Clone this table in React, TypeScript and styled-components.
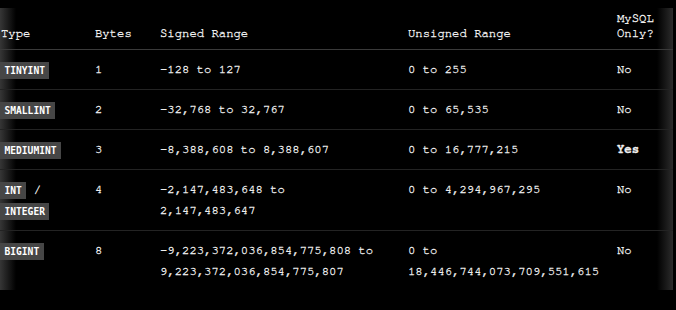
import styled, { createGlobalStyle } from "styled-components";

const GlobalStyle = createGlobalStyle`
  html, body {
    margin: 0;
    background: #000;
  }
  body {
    padding: 8px 3px 0 0;
  }
`;

type Row = {
  types: string[];
  bytes: string;
  signed: string[];
  unsigned: string[];
  mysql: string;
  strong?: boolean;
};

const rows: Row[] = [
  { types: ["TINYINT"], bytes: "1", signed: ["-128 to 127"], unsigned: ["0 to 255"], mysql: "No" },
  { types: ["SMALLINT"], bytes: "2", signed: ["-32,768 to 32,767"], unsigned: ["0 to 65,535"], mysql: "No" },
  {
    types: ["MEDIUMINT"],
    bytes: "3",
    signed: ["-8,388,608 to 8,388,607"],
    unsigned: ["0 to 16,777,215"],
    mysql: "Yes",
    strong: true,
  },
  {
    types: ["INT", "INTEGER"],
    bytes: "4",
    signed: ["-2,147,483,648 to", "2,147,483,647"],
    unsigned: ["0 to 4,294,967,295"],
    mysql: "No",
  },
  {
    types: ["BIGINT"],
    bytes: "8",
    signed: ["-9,223,372,036,854,775,808 to", "9,223,372,036,854,775,807"],
    unsigned: ["0 to", "18,446,744,073,709,551,615"],
    mysql: "No",
  },
];

const Scroller = styled.div`
  height: 282px;
  background:
    linear-gradient(to right, #363636, rgba(0, 0, 0, 0) 16px),
    linear-gradient(to left, #2c2c2c, rgba(0, 0, 0, 0) 16px),
    #000;
  font-family: "Nimbus Mono PS", "Nimbus Mono L", "FreeMono", "Courier New", "Liberation Mono", monospace;
  font-size: 12.25px;
  color: #f0f0f0;
  -webkit-text-stroke: 0.3px #f0f0f0;
`;

const Grid = styled.div`
  display: grid;
  grid-template-columns: 94px 65px 248px 209px 1fr;
`;

const Head = styled.div`
  display: flex;
  flex-direction: column;
  justify-content: flex-end;
  line-height: 15px;
  padding: 4px 0 8px 1px;
  height: 42px;
  box-sizing: border-box;
  border-bottom: 1px solid #3a3a3a;
`;

const Cell = styled.div<{ $last?: boolean; $strong?: boolean }>`
  padding: 9px 0 9px 1px;
  line-height: 21px;
  border-bottom: 1px solid ${(p) => (p.$last ? "transparent" : "#232323")};
  font-weight: ${(p) => (p.$strong ? 700 : 400)};
  white-space: nowrap;
`;

const Line = styled.div`
  height: 21px;
`;

const Badge = styled.span`
  display: inline-block;
  vertical-align: middle;
  margin-left: -1px;
  background: #464646;
  color: #fff;
  -webkit-text-stroke: 0;
  font-family: "DejaVu Sans Mono", "Liberation Mono", monospace;
  font-weight: 700;
  font-size: 9.6px;
  line-height: 13px;
  padding: 2px 4.5px;
`;

export default function App() {
  return (
    <>
      <GlobalStyle />
      <Scroller>
        <Grid>
          <Head>Type</Head>
          <Head>Bytes</Head>
          <Head>Signed Range</Head>
          <Head>Unsigned Range</Head>
          <Head>
            <span>MySQL</span>
            <span>Only?</span>
          </Head>
          {rows.map((r, i) => {
            const last = i === rows.length - 1;
            return [
              <Cell key={`t${i}`} $last={last}>
                {r.types.map((t, j) => (
                  <Line key={t}>
                    <Badge>{t}</Badge>
                    {j < r.types.length - 1 ? " /" : null}
                  </Line>
                ))}
              </Cell>,
              <Cell key={`b${i}`} $last={last}>
                {r.bytes}
              </Cell>,
              <Cell key={`s${i}`} $last={last}>
                {r.signed.map((s) => (
                  <Line key={s}>{s}</Line>
                ))}
              </Cell>,
              <Cell key={`u${i}`} $last={last}>
                {r.unsigned.map((s) => (
                  <Line key={s}>{s}</Line>
                ))}
              </Cell>,
              <Cell key={`m${i}`} $last={last} $strong={r.strong}>
                {r.mysql}
              </Cell>,
            ];
          })}
        </Grid>
      </Scroller>
    </>
  );
}
